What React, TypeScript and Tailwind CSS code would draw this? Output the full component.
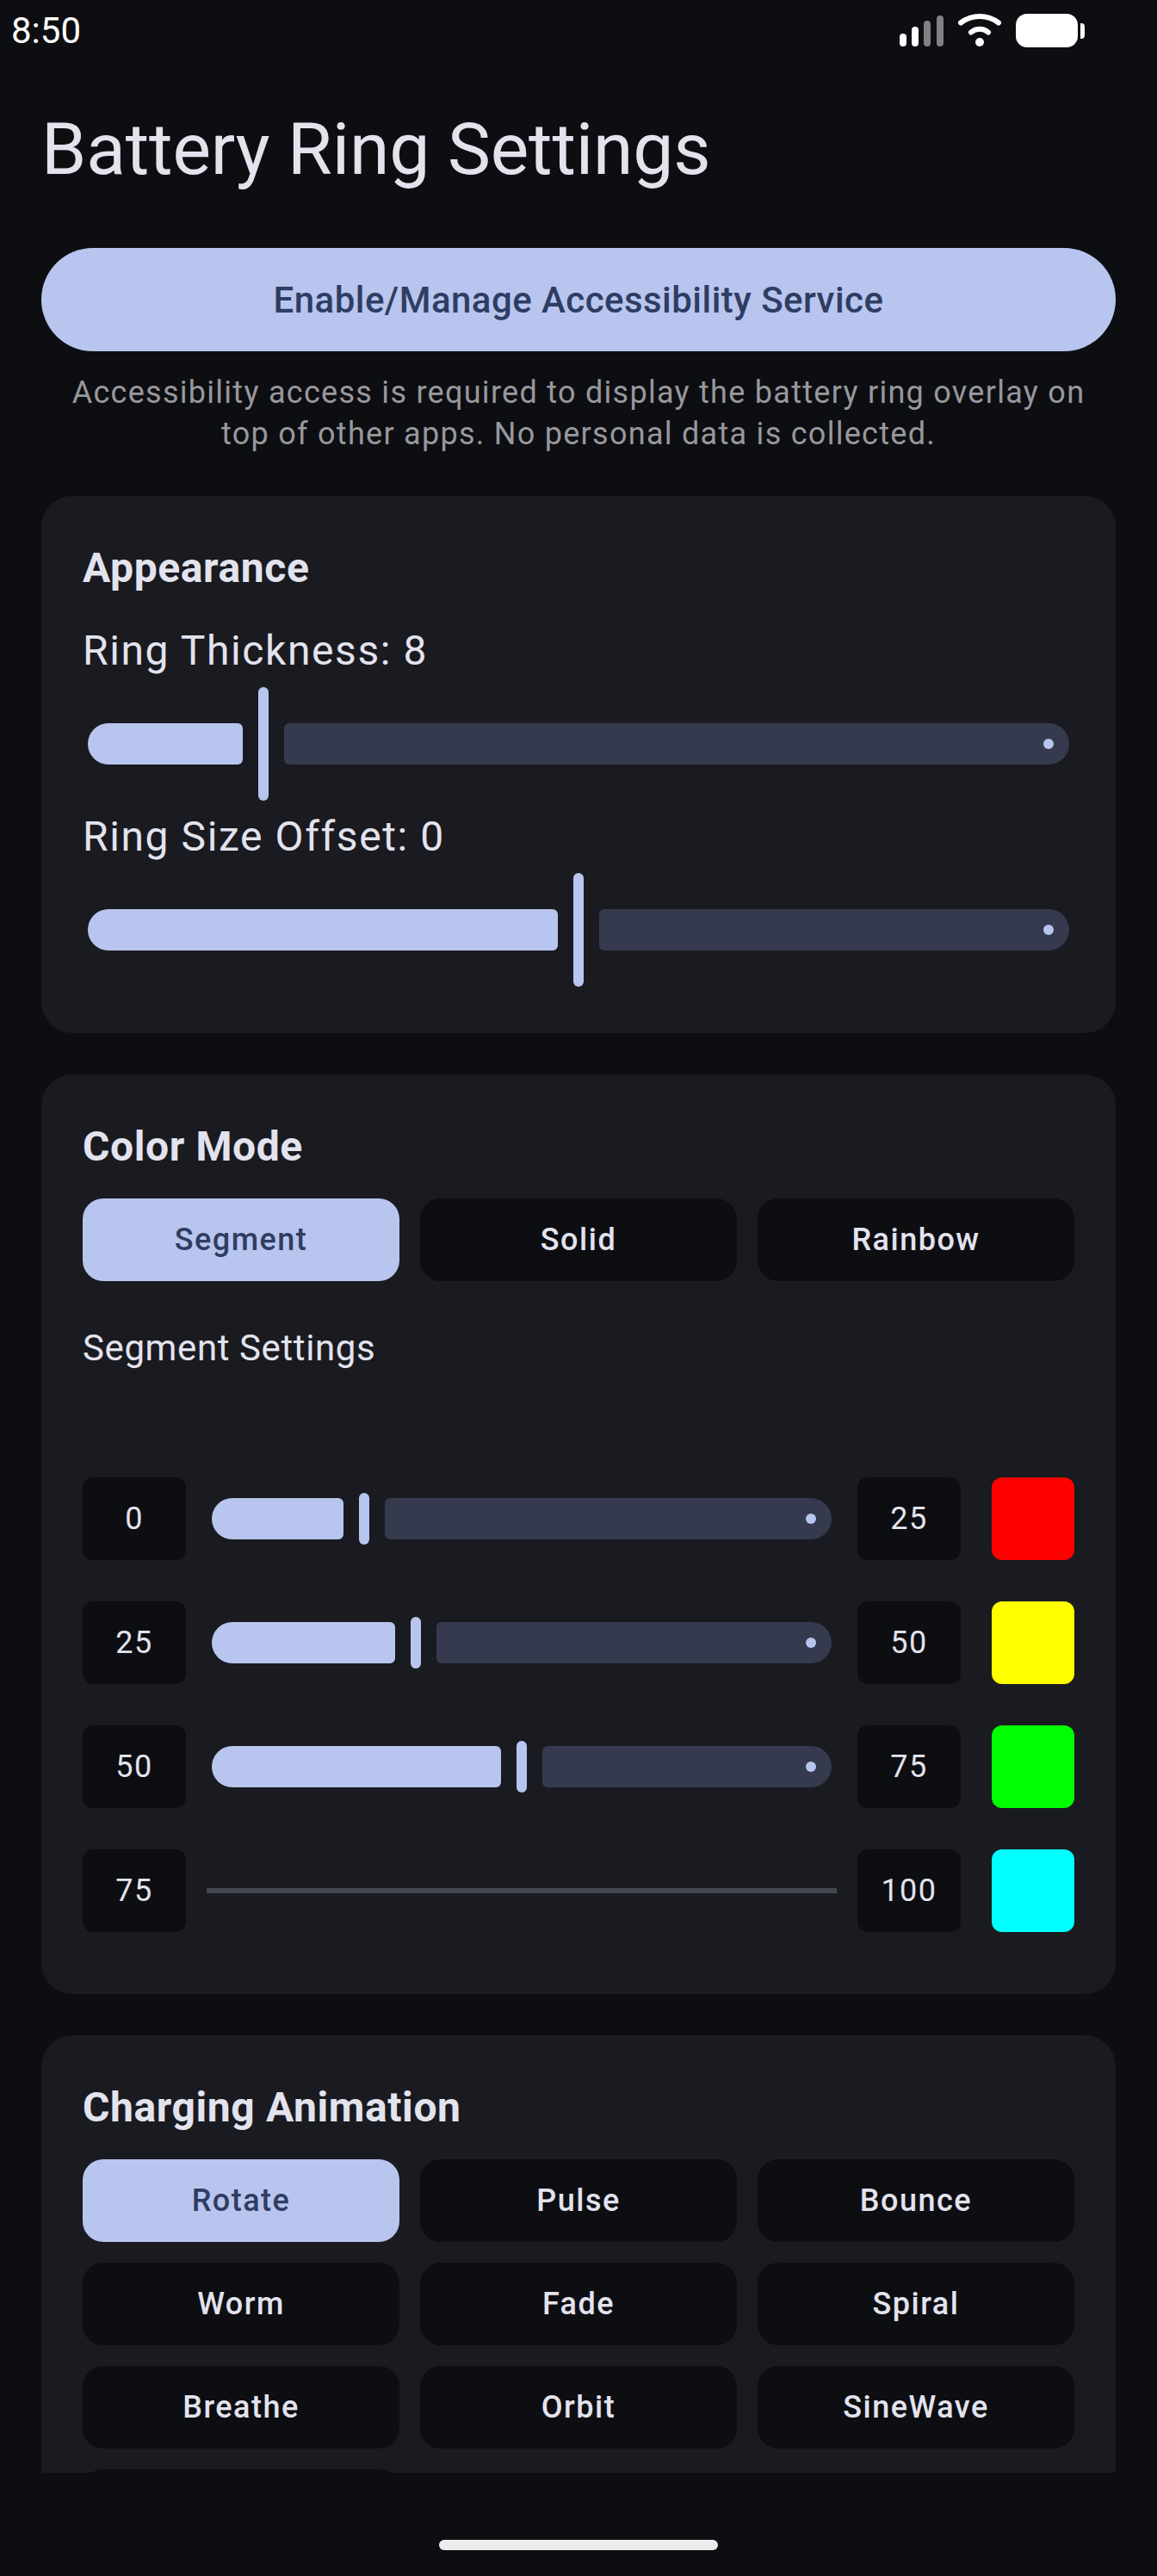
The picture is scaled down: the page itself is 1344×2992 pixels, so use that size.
import React from "react";

const options = (selected: string, items: string[]) => (
  <div className="grid grid-cols-3 gap-6">
    {items.map((item, i) => (
      <button
        key={i}
        className={
          item === selected
            ? "h-24 rounded-3xl bg-[#b8c5ee] text-[36px] font-medium tracking-[1.5px] text-[#2f3d63]"
            : "h-24 rounded-3xl bg-[#0d0e12] text-[36px] font-medium tracking-[1.5px] text-[#e3e3ee]"
        }
      >
        {item}
      </button>
    ))}
  </div>
);

function Card({ title, children }: { title: string; children: React.ReactNode }) {
  return (
    <section className="mb-12 rounded-[36px] bg-[#1a1b20] p-12">
      <h2 className="mb-6 text-[48px] leading-[72px] font-bold tracking-[0.6px] text-[#e3e3ee]">{title}</h2>
      {children}
    </section>
  );
}

function Track({ fill, height }: { fill: number; height: string }) {
  return (
    <div className={`flex flex-1 items-center gap-[18px] px-1.5 ${height}`}>
      <div className="h-12 rounded-l-3xl rounded-r-md bg-[#b8c5ee]" style={{ width: fill }} />
      <div className={height === "h-36" ? "h-[132px] w-3 rounded-full bg-[#b8c5ee]" : "h-[60px] w-3 rounded-full bg-[#b8c5ee]"} />
      <div className="flex h-12 flex-1 items-center justify-end rounded-l-md rounded-r-3xl bg-[#353a4e] pr-[18px]">
        <div className="h-3 w-3 rounded-full bg-[#b8c5ee]" />
      </div>
    </div>
  );
}

function NumberBox({ value }: { value: number }) {
  return (
    <div className="flex h-24 w-[120px] items-center justify-center rounded-xl bg-[#0d0e12] text-[36px] tracking-[1.5px] text-[#e3e3ee]">
      {value}
    </div>
  );
}

const segments = [
  { from: 0, to: 25, fill: 153, color: "bg-[#ff0000]" },
  { from: 25, to: 50, fill: 213, color: "bg-[#ffff00]" },
  { from: 50, to: 75, fill: 336, color: "bg-[#00ff00]" },
  { from: 75, to: 100, fill: 0, color: "bg-[#00ffff]" },
];

export default function App() {
  return (
    <div className="flex h-[2992px] w-[1344px] flex-col overflow-hidden bg-[#0d0e12] font-['Roboto',sans-serif]">
      <div className="h-[2872px] overflow-hidden">
        {/* status bar */}
        <div className="flex h-[72px] items-start justify-between pt-[11px] pr-[84px] pl-[13px]">
          <span className="text-[42px] leading-[50px] text-white">8:50</span>
          <svg width="216" height="40" viewBox="0 0 216 40" className="mt-[5px]">
            <rect x="1" y="23" width="8" height="15" rx="4" fill="#fff" />
            <rect x="15" y="15" width="8" height="23" rx="4" fill="#fff" />
            <rect x="29" y="8" width="8" height="30" rx="4" fill="#808184" />
            <rect x="44" y="2" width="8" height="36" rx="4" fill="#808184" />
            <path d="M72 10.5C85 0.5 103 0.5 116 10.5" stroke="#fff" strokeWidth="6" fill="none" strokeLinecap="round" />
            <path d="M84 21.5C90 16.5 98 16.5 104 21.5" stroke="#fff" strokeWidth="6" fill="none" strokeLinecap="round" />
            <circle cx="94" cy="33" r="5" fill="#fff" />
            <rect x="136" y="0" width="72" height="39" rx="13" fill="#fff" />
            <path d="M211 11h1a4 4 0 0 1 4 4v10a4 4 0 0 1-4 4h-1z" fill="#fff" />
          </svg>
        </div>

        <div className="px-12">
          <h1 className="mt-12 mb-[60px] text-[84px] leading-[108px] font-normal tracking-[-0.15px] text-[#e3e3ee]">Battery Ring Settings</h1>
          <button className="h-[120px] w-full rounded-full bg-[#b8c5ee] text-[42px] font-medium tracking-[0.45px] text-[#2f3d63]">
            Enable/Manage Accessibility Service
          </button>
          <p className="mt-6 mb-12 text-center text-[36px] leading-12 tracking-[1.28px] text-[#98989d]">
            Accessibility access is required to display the battery ring overlay on
            <br />
            top of other apps. No personal data is collected.
          </p>

          <Card title="Appearance">
            <p className="text-[48px] leading-[72px] tracking-[1.6px] text-[#e3e3ee]">Ring Thickness: 8</p>
            <Track fill={180} height="h-36" />
            <p className="text-[48px] leading-[72px] tracking-[1.6px] text-[#e3e3ee]">Ring Size Offset: 0</p>
            <Track fill={546} height="h-36" />
          </Card>

          <Card title="Color Mode">
            {options("Segment", ["Segment", "Solid", "Rainbow"])}
            <p className="mt-12 mb-[120px] text-[42px] leading-[60px] tracking-[0.6px] text-[#e3e3ee]">Segment Settings</p>
            <div className="mb-6 flex flex-col gap-12">
              {segments.map((s) => (
                <div key={s.from} className="flex items-center gap-6">
                  <NumberBox value={s.from} />
                  {s.fill > 0 ? (
                    <Track fill={s.fill} height="h-[60px]" />
                  ) : (
                    <div className="h-1.5 flex-1 bg-[#44474e]" />
                  )}
                  <NumberBox value={s.to} />
                  <div className={`ml-3 h-24 w-24 rounded-xl ${s.color}`} />
                </div>
              ))}
            </div>
          </Card>

          <Card title="Charging Animation">
            {/* last row is cut off by the bottom bar, its label isn't visible */}
            {options("Rotate", ["Rotate", "Pulse", "Bounce", "Worm", "Fade", "Spiral", "Breathe", "Orbit", "SineWave", ""])}
          </Card>
        </div>
      </div>

      <div className="flex flex-1 justify-center pt-[78px]">
        <div className="h-3 w-[324px] rounded-full bg-[#ececec]" />
      </div>
    </div>
  );
}
